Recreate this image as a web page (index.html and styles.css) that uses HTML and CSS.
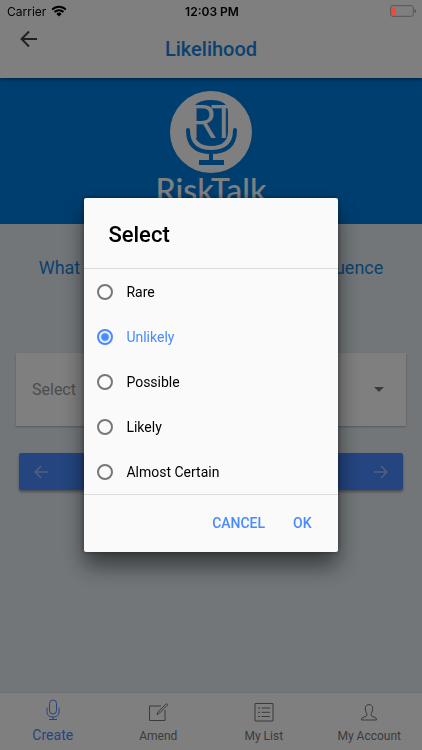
FILE: index.html
```html
<!DOCTYPE html>
<html lang="en">
<head>
<meta charset="utf-8">
<meta name="viewport" content="width=device-width, initial-scale=1">
<title>Likelihood</title>
<link rel="stylesheet" href="styles.css">
</head>
<body>
<div class="status">
  <span class="carrier">Carrier
    <svg width="16" height="12" viewBox="0 0 16 12"><path d="M1.2 4.6a9.6 9.6 0 0 1 13.6 0M3.5 7a6.4 6.4 0 0 1 9 0" fill="none" stroke="#000" stroke-width="2"/><path d="M5.4 8.900a3.7 3.7 0 0 1 5.2 0L8 11.6z"/></svg>
  </span>
  <span class="clock">12:03 PM</span>
  <svg class="battery" width="27" height="12" viewBox="0 0 27 12"><rect x=".7" y=".7" width="22.6" height="10.6" rx="2" fill="none" stroke="#555"/><rect x="2" y="2" width="4" height="8" rx="1" fill="#f04a3e"/><path d="M24.500 4v4q1.800-.6 1.800-2t-1.800-2z" fill="#555"/></svg>
</div>
<div class="app">
  <header class="header">
    <button class="back" aria-label="Back"><svg width="18" height="18" viewBox="0 0 18 18"><path d="M17 9H2M9 1.500 1.600 9 9 16.500" fill="none" stroke="#424242" stroke-width="2"/></svg></button>
    <h1>Likelihood</h1>
  </header>
  <main class="content">
    <div class="banner">
      <svg width="130" height="133" viewBox="0 0 130 133" role="img" aria-label="RiskTalk">
        <circle cx="65" cy="41" r="41" fill="#fff"/>
        <path d="M49 14Q54 9 65 9q17 0 17 12v19q0 15-17 15-16 0-17-15z" fill="#007ce0"/>
        <text class="mono" x="42" y="47">R<tspan x="65">T</tspan></text>
        <path d="M42 39q0 22 23 22 24 0 24-22" fill="none" stroke="#007ce0" stroke-width="4" stroke-linecap="round"/>
        <path d="M63 62h4v7h11v5H53v-5h10z" fill="#007ce0"/>
        <text class="brand" x="65" y="111" text-anchor="middle">RiskTalk</text>
      </svg>
    </div>
    <p class="question">What is the Likelihood of this Consequence</p>
    <div class="field">
      <select aria-label="Likelihood"><option>Select</option></select>
      <svg width="10" height="5" viewBox="0 0 10 5"><path d="M0 0h10L5 5z" fill="#777"/></svg>
    </div>
    <div class="steps">
      <button aria-label="Previous"><svg width="14" height="14" viewBox="0 0 14 14"><path d="M14 7H1M7 1 1 7l6 6" fill="none" stroke="#a4c0f8" stroke-width="1.500"/></svg></button>
      <button aria-label="Next"><svg width="14" height="14" viewBox="0 0 14 14"><path d="M0 7h13M7 1l6 6-6 6" fill="none" stroke="#a4c0f8" stroke-width="1.500"/></svg></button>
    </div>
  </main>
  <nav class="tabs">
    <a href="#create" class="active"><svg width="22" height="22" viewBox="0 0 22 22"><rect x="7.500" y="1" width="7" height="14" rx="3.500"/><path d="M5 8.500v4.500q0 5 6 5t6-5V8.500M11 18v2.500M7 20.500h8"/></svg><span>Create</span></a>
    <a href="#amend"><svg width="22" height="22" viewBox="0 0 22 22"><path d="M14 5H2.500v14.500h15.500V9"/><path d="M10 13.500l1-2.500 8.500-8.500 1.300 1.300-8.500 8.500z"/></svg><span>Amend</span></a>
    <a href="#list"><svg width="22" height="22" viewBox="0 0 22 22"><path d="M2 2.500h18v17.500H2zM8.500 7H17M8.500 11.300H17M8.500 15.500H17M5 7h2M5 11.300h2M5 15.500h2"/></svg><span>My List</span></a>
    <a href="#account"><svg width="22" height="22" viewBox="0 0 22 22"><path d="M9 14q0-1.500-1-3-2.500-7 3-7.500 5.500.5 3 7.500-1 1.500-1 3 0 1.200 3 2t2.500 3h-15q-.5-2.200 2.500-3T9 14z"/></svg><span>My Account</span></a>
  </nav>
</div>
<div class="overlay">
  <form class="dialog" role="dialog" aria-labelledby="dialog-title">
    <h2 id="dialog-title">Select</h2>
    <div class="options">
      <label><input type="radio" name="level">Rare</label>
      <label><input type="radio" name="level" checked>Unlikely</label>
      <label><input type="radio" name="level">Possible</label>
      <label><input type="radio" name="level">Likely</label>
      <label><input type="radio" name="level">Almost Certain</label>
    </div>
    <div class="actions"><button type="button">CANCEL</button><button type="button">OK</button></div>
  </form>
</div>
</body>
</html>
```
FILE: styles.css
```css
* { box-sizing: border-box; }
body { margin: 0; font-family: Roboto, sans-serif; color: #000; }
button { border: 0; background: none; padding: 0; font: inherit; }
svg { display: block; }

.status {
  position: fixed; inset: 0 0 auto; z-index: 3;
  display: grid; grid-template-columns: 1fr auto 1fr; align-items: center;
  height: 22px; padding: 0 5px 0 7px;
  font: 12px Inter, sans-serif;
}
.carrier { display: flex; align-items: center; gap: 5px; }
.clock { font-weight: 600; }
.battery { justify-self: end; }

.app { display: flex; flex-direction: column; min-height: 100vh; background: #e4edf2; }
.header {
  display: grid; grid-template-columns: 1fr auto 1fr; align-items: start;
  height: 78px; padding: 30px 20px 0; background: #fff;
  position: relative; box-shadow: 0 1px 4px rgba(0, 0, 0, .5);
}
.header h1 { margin: 6px 0 0; font-size: 20px; line-height: 26px; font-weight: 500; color: #1583dc; }
.back { justify-self: start; }

.content { flex: 1; }
.banner { display: flex; justify-content: center; height: 146px; padding-top: 13px; background: #007ce0; }
.mono { font-family: "Open Sans", sans-serif; font-size: 46px; fill: #fff; }
.brand { font-family: Lato, sans-serif; font-size: 32px; font-weight: 500; fill: #fff; }
.question { margin: 32px 16px 0; text-align: center; font-size: 18px; line-height: 24px; color: #1583dc; }
.field {
  display: flex; align-items: center; margin: 73px 16px 0; padding: 0 22px 0 16px;
  height: 73px; background: #fff; box-shadow: 0 1px 2px rgba(0, 0, 0, .25);
}
.field select {
  flex: 1; appearance: none; border: 0; padding: 0; background: none;
  font: 16px Roboto, sans-serif; color: #999;
}
.steps {
  display: flex; margin: 27px 19px 0; border-radius: 2px;
  background: #488aff; box-shadow: 0 2px 3px rgba(0, 0, 0, .35);
}
.steps button { flex: 1; display: flex; height: 37px; padding: 0 15px; align-items: center; }
.steps button + button { justify-content: flex-end; }

.tabs { display: flex; height: 58px; background: #fff; border-top: 1px solid #d8dde4; }
.tabs a {
  flex: 1; display: flex; flex-direction: column; align-items: center; gap: 4px; padding-top: 8px;
  font-size: 12px; line-height: 18px; color: #777; text-decoration: none;
}
.tabs svg { fill: none; stroke: currentColor; stroke-width: 1; }
.tabs .active { padding-top: 6px; gap: 5px; font-size: 14px; color: #488aff; }

.overlay {
  position: fixed; inset: 0; z-index: 2; display: flex; align-items: center; justify-content: center;
  background: rgba(0, 0, 0, .5);
}
.dialog {
  width: 60%; max-width: 280px; border-radius: 2px; background: #fafafa;
  box-shadow: 0 14px 22px rgba(0, 0, 0, .5), 0 0 5px rgba(0, 0, 0, .4);
}
.dialog h2 { margin: 0; padding: 22px 24px 19px; font-size: 22px; line-height: 29px; font-weight: 500; }
.options { border: solid #dcdcdc; border-width: 1px 0; }
.options label { display: flex; align-items: center; gap: 13px; height: 45px; padding-left: 13px; font-size: 14px; }
.options input {
  appearance: none; width: 16px; height: 16px; margin: 0; border: 2px solid #777; border-radius: 50%;
}
.options input:checked { border-color: #488aff; background: radial-gradient(circle, #488aff 3px, transparent 5px); }
.options label:has(:checked) { color: #488aff; }
.actions { display: flex; justify-content: flex-end; gap: 28px; padding: 18px 26px 19px; }
.actions button { font-size: 14px; line-height: 20px; font-weight: 500; color: #488aff; }
```
